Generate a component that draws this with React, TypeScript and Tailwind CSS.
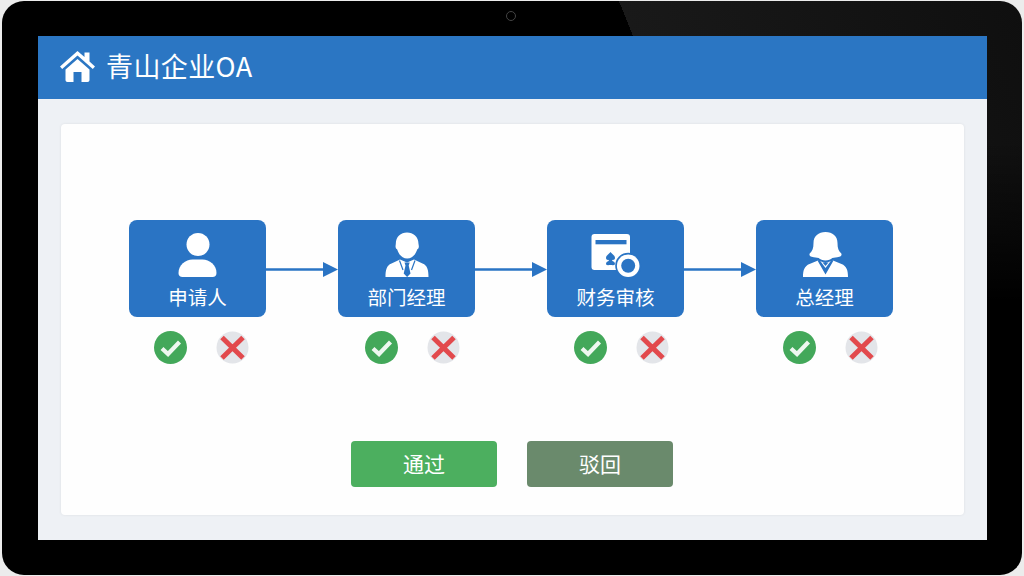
const font = { fontFamily: '"Noto Sans CJK SC", "Noto Sans", sans-serif' };

function HomeIcon() {
  return (
    <svg viewBox="0 0 37 34" className="w-[37px] h-[34px]">
      <path d="M1 17.500 18.500 2 25.500 8V3.500h5v9l5.500 5-2.200 2.400L18.500 6.500 3.200 19.900Z" fill="#fff" />
      <path d="M6.500 20.500 18.500 10l12 10.500V31c0 1.200-.8 2-2 2H22.500V23h-8v10H8.500c-1.200 0-2-.8-2-2Z" fill="#fff" />
    </svg>
  );
}

function ApplicantIcon() {
  return (
    <svg viewBox="0 0 60 50" className="w-[60px] h-[50px]">
      <circle cx="30" cy="12.500" r="11.500" fill="#fff" />
      <path d="M10.500 41c0-8 7-13.500 14-13.500h10c7 0 14 5.500 14 13.500 0 2.500-1.500 4-4 4h-30c-2.500 0-4-1.500-4-4Z" fill="#fff" />
    </svg>
  );
}

function ManagerIcon() {
  return (
    <svg viewBox="0 0 60 50" className="w-[60px] h-[50px]">
      <path d="M18.800 12c0-7.500 5-11.500 11.200-11.500S41.500 4.500 41.500 12c0 1 .5 1.500.3 3-.2 1.500-1 2-1.600 2.500-1.500 5-5 9-10 9s-8.500-4-10-9c-.6-.5-1.400-1-1.600-2.500-.2-1.500.2-2 .2-3Z" fill="#fff" />
      <path d="M8.500 45c0-7 1-11.500 6-13.500l8.500-4 7 3 7-3 8.500 4c5 2 6 6.500 6 13.500Z" fill="#fff" />
      <path d="M27.500 30.500h5.200l-1 3 1.800 8-3.400 3.500-3.400-3.500 1.800-8Z" fill="#2a74c4" />
      <path d="M22.500 28.500 26 38M38 28.500 34.500 38" stroke="#2a74c4" strokeWidth="1.200" fill="none" />
    </svg>
  );
}

function FinanceIcon() {
  return (
    <svg viewBox="0 0 60 50" className="w-[60px] h-[50px]">
      <rect x="5.500" y="2" width="38.500" height="36" rx="3" fill="#fff" />
      <rect x="9.500" y="8" width="31" height="4.300" fill="#2a74c4" />
      <path d="M24.500 20c1.500 2 4.500 3.500 4.500 6 0 1.500-1.500 2.300-3 1.700l.4 1.300c1.500.3 2.600 1.500 2.600 3 0 1-1.500 1.500-3 1h-3c-1.500.5-3 0-3-1 0-1.500 1.100-2.700 2.600-3l.4-1.300c-1.500.6-3-.2-3-1.700 0-2.500 3-4 4.500-6Z" fill="#2a74c4" />
      <circle cx="42.200" cy="33.700" r="13" fill="#2a74c4" />
      <circle cx="42.200" cy="33.700" r="11.300" fill="#fff" />
      <circle cx="42.200" cy="33.700" r="7" fill="#2a74c4" />
    </svg>
  );
}

function DirectorIcon() {
  return (
    <svg viewBox="0 0 60 50" className="w-[60px] h-[50px]">
      <path d="M18.500 11C18.500 4 23.500 0 30.500 0s12 4 12 11c0 5 1 8 3.800 10.500.8 1.500-.3 2.800-2 3.200-3 .7-5 1-7 1.300-1.500 1.500-4 2.500-6.800 2.500s-5.300-1-6.800-2.500c-2-.3-4-.6-7-1.300-1.700-.4-2.800-1.700-2-3.200C17.500 19 18.500 16 18.500 11Z" fill="#fff" />
      <path d="M8 45c0-7 1.500-11 6.500-13l8.500-3.500 7.500 2.500 7.500-2.500 8.500 3.500c5 2 6.500 6 6.500 13Z" fill="#fff" />
      <path d="M22.500 28.500 30.500 42.500 38.500 28.500 36.500 28 30.500 36 24.500 28Z" fill="#2a74c4" />
      <path d="M27.500 30.500h6l-3 3.500Z" fill="#2a74c4" />
    </svg>
  );
}

function Arrow() {
  return (
    <svg viewBox="0 0 72 16" className="w-[72px] h-[16px] shrink-0">
      <path d="M0 8.500h58" stroke="#2a74c4" strokeWidth="2.400" />
      <path d="M57 1 72 8.500 57 16Z" fill="#2a74c4" />
    </svg>
  );
}

function Approved() {
  return (
    <svg viewBox="0 0 33 33" className="w-[33px] h-[33px]">
      <circle cx="16.500" cy="16.500" r="16.500" fill="#43a85a" />
      <path d="M8 17.500 14 23 25.500 11" stroke="#eef7f0" strokeWidth="4.200" fill="none" />
    </svg>
  );
}

function Rejected() {
  return (
    <svg viewBox="0 0 33 33" className="w-[33px] h-[33px]">
      <circle cx="16.500" cy="16.500" r="16" fill="#e3e5e9" />
      <path d="M6 6.500 27 27M27 6.500 6 27" stroke="#e2494c" strokeWidth="5" />
    </svg>
  );
}

const steps = [
  { label: "申请人", icon: <ApplicantIcon />, shift: "pl-[7px]" },
  { label: "部门经理", icon: <ManagerIcon />, shift: "pl-[11px]" },
  { label: "财务审核", icon: <FinanceIcon />, shift: "pl-[12px]" },
  { label: "总经理", icon: <DirectorIcon />, shift: "pl-[11px]" },
];

export default function App() {
  return (
    <div className="w-[1024px] h-[576px] overflow-hidden bg-[#ececec] py-[1px] px-[2px]" style={font}>
      {/* top-right glass reflection fades out down the bezel */}
      <div className="relative h-full rounded-[22px] bg-[linear-gradient(to_bottom,transparent_140px,#000_300px),linear-gradient(68deg,#000_67.8%,#191919_67.8%,#0f0f0f_100%)] bg-black pt-[35px] pl-[36px] pr-[35px] pb-[35px]">
        {/* Camera */}
        <div className="absolute left-[504px] top-[10px] w-[10px] h-[10px] rounded-full bg-black border border-[#444]" />

        <div className="h-full flex flex-col bg-[#eef1f5]">
          <header className="h-[63px] shrink-0 flex items-center gap-[10px] pl-[21px] pb-[3px] bg-[#2b76c3] text-white">
            <HomeIcon />
            <h1 className="text-[27px] leading-none font-normal pb-[2px] tracking-[0.4px]">青山企业OA</h1>
          </header>

          <main className="flex-1 px-[23px] pt-[25px] pb-[25px]">
            <div className="h-full flex flex-col items-start rounded bg-[#fefefe] pt-[96px] pl-[68px] shadow-[0_0_3px_rgba(0,0,0,0.08)]">
              <div className="flex items-start">
                {steps.map((step, i) => (
                  <div key={step.label} className="flex items-start">
                    <div className="w-[137px] flex flex-col">
                      <div className="h-[97px] rounded-lg bg-[#2a74c4] flex flex-col items-center pt-[12px] text-white">
                        {step.icon}
                        <span className="mt-[3px] text-[19.500px] leading-[24px]">{step.label}</span>
                      </div>
                      <div className={`mt-[14px] flex justify-center gap-[29px] ${step.shift}`}>
                        <Approved />
                        <Rejected />
                      </div>
                    </div>
                    {i < steps.length - 1 && (
                      <div className="h-[97px] flex items-center">
                        <Arrow />
                      </div>
                    )}
                  </div>
                ))}
              </div>

              <div className="mt-[77px] ml-[222px] flex gap-[30px] text-white text-[21px]">
                <button className="w-[146px] h-[46px] rounded bg-[#4caf5f]">通过</button>
                <button className="w-[146px] h-[46px] rounded bg-[#6a8a6c]">驳回</button>
              </div>
            </div>
          </main>
        </div>
      </div>
    </div>
  );
}
